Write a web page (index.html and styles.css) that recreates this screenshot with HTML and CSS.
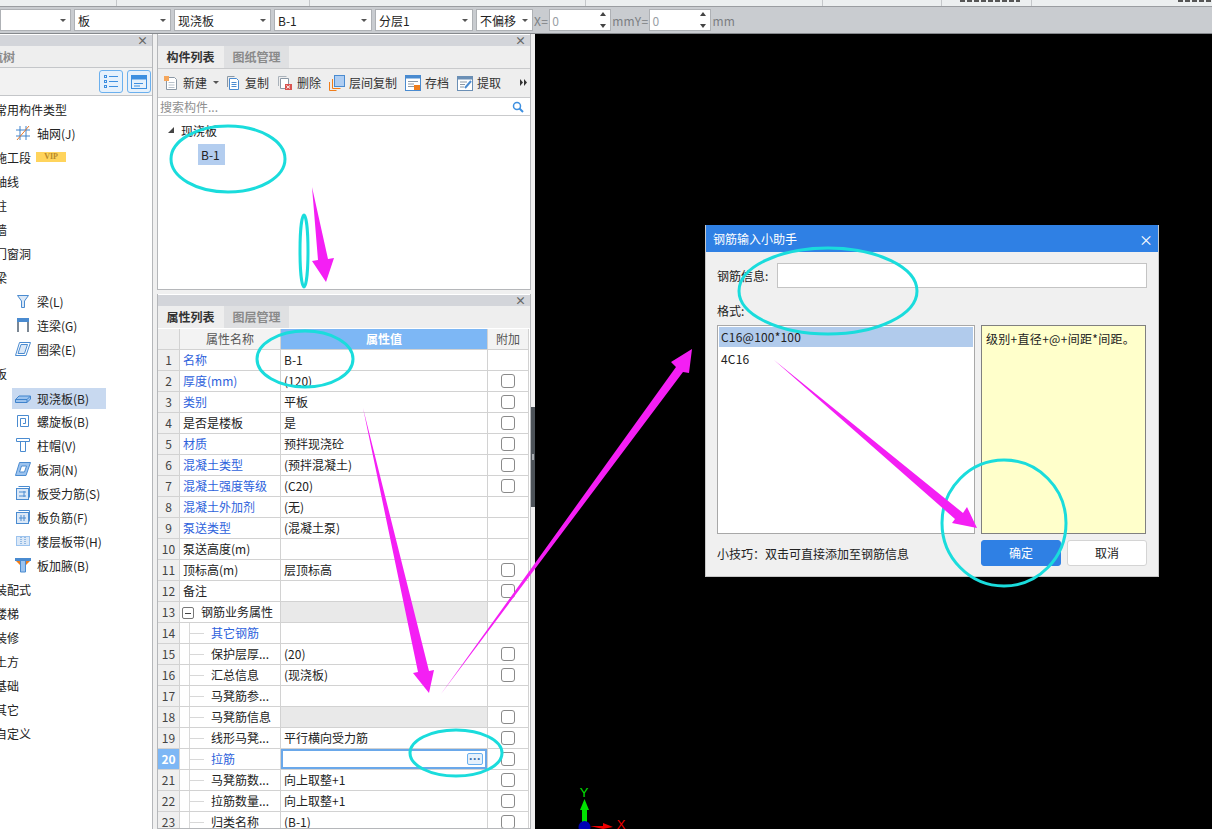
FILE: index.html
```html
<!DOCTYPE html>
<html lang="zh-CN">
<head>
    <meta charset="UTF-8">
    <title>钢筋输入小助手</title>
    <link rel="stylesheet" href="styles.css">
</head>
<body>
    <div class="menu-strip">
        <span class="strip-cell" style="width:117px"></span>
        <span class="strip-cell" style="width:193px"></span>
        <span class="strip-cell" style="width:276px"></span>
        <span class="strip-cell" style="width:237px"></span>
        <span class="strip-cell" style="width:119px"></span>
        <span class="strip-cell" style="width:90px"><i class="strip-bit bit-one"></i></span>
        <span class="strip-rest"><i class="strip-bit bit-two"></i></span>
    </div>

    <div class="option-bar">
        <div class="combo combo-first"><span></span><i class="caret"></i></div>
        <div class="combo combo-w97"><span>板</span><i class="caret"></i></div>
        <div class="combo combo-w96"><span>现浇板</span><i class="caret"></i></div>
        <div class="combo combo-w98"><span>B-1</span><i class="caret"></i></div>
        <div class="combo combo-w98"><span>分层1</span><i class="caret"></i></div>
        <div class="combo combo-w57"><span>不偏移</span><i class="caret"></i></div>
        <span class="bar-label">X=</span>
        <div class="spin"><span>0</span><b class="spin-arrows"><i class="up"></i><i class="down"></i></b></div>
        <span class="bar-label">mmY=</span>
        <div class="spin"><span>0</span><b class="spin-arrows"><i class="up"></i><i class="down"></i></b></div>
        <span class="bar-label">mm</span>
    </div>

    <div class="workspace">
        <div class="nav-panel">
            <div class="panel-head"><span class="close-x">×</span></div>
            <div class="nav-tab"><span>导航树</span></div>
            <div class="nav-tools">
                <span class="view-btn">
                    <svg width="18" height="16" viewBox="0 0 18 16"><g fill="none" stroke="#3d8fe0"><rect x="2.5" y="1.5" width="2" height="2"/><rect x="2.5" y="6.5" width="2" height="2"/><rect x="2.5" y="11.5" width="2" height="2"/><path d="M7 2.5h9M7 7.5h9M7 12.5h9"/></g></svg>
                </span>
                <span class="view-btn">
                    <svg width="18" height="16" viewBox="0 0 18 16"><rect x="1.5" y="1.5" width="15" height="13" fill="none" stroke="#3d8fe0"/><rect x="1.5" y="1.5" width="15" height="4" fill="#3d8fe0"/><path d="M4 9.5h9M4 12h6" stroke="#3d8fe0"/></svg>
                </span>
            </div>
            <div class="nav-tree">
                <div class="tree-top">常用构件类型</div>
                <div class="tree-sub">
                    <svg class="tree-icon" viewBox="0 0 16 16"><path d="M5 1v14M11 1v14M1 5h14M1 11h14" stroke="#3f83cc" fill="none"/><path d="M2 15L14 1" stroke="#e8792a" fill="none"/></svg>
                    轴网(J)
                </div>
                <div class="tree-top">施工段<span class="vip">VIP</span></div>
                <div class="tree-top">轴线</div>
                <div class="tree-top">柱</div>
                <div class="tree-top">墙</div>
                <div class="tree-top">门窗洞</div>
                <div class="tree-top">梁</div>
                <div class="tree-sub">
                    <svg class="tree-icon" viewBox="0 0 16 16"><path d="M2.500 2.500h11L9.500 8v6.500h-3V8z" fill="#dbe8f7" stroke="#4a8bd0"/></svg>
                    梁(L)
                </div>
                <div class="tree-sub">
                    <svg class="tree-icon" viewBox="0 0 16 16"><rect x="2" y="1" width="12" height="4" fill="#4a8bd0"/><path d="M3 5v10M13 5v10" stroke="#7b8794" stroke-width="2" fill="none"/></svg>
                    连梁(G)
                </div>
                <div class="tree-sub">
                    <svg class="tree-icon" viewBox="0 0 16 16"><path d="M4.500 1.500h11L11 14.500H.5z" fill="#fff" stroke="#4a8bd0"/><path d="M6 3.500h6.500L9.500 12.500H3z" fill="#dbe8f7" stroke="#4a8bd0"/></svg>
                    圈梁(E)
                </div>
                <div class="tree-top">板</div>
                <div class="tree-sub tree-selected">
                    <svg class="tree-icon" viewBox="0 0 16 16"><path d="M.5 8.500L4 5h11.500v3L12 11.500H.5z" fill="#9cc3ee" stroke="#3f83cc"/><path d="M.5 8.500H12L15.500 5M12 8.500v3" fill="none" stroke="#3f83cc"/></svg>
                    现浇板(B)
                </div>
                <div class="tree-sub">
                    <svg class="tree-icon" viewBox="0 0 16 16"><path d="M2.500 14V2.500h11v11H5.500V5.500h5v5H8" fill="none" stroke="#4a8bd0"/></svg>
                    螺旋板(B)
                </div>
                <div class="tree-sub">
                    <svg class="tree-icon" viewBox="0 0 16 16"><path d="M1.500 1.500h13v3h-13zM5.500 4.500h5v10h-5z" fill="#fff" stroke="#4a8bd0"/></svg>
                    柱帽(V)
                </div>
                <div class="tree-sub">
                    <svg class="tree-icon" viewBox="0 0 16 16"><path d="M4.500 1.500h11L11 14.500H.5z" fill="#9cc3ee" stroke="#4a8bd0"/><path d="M6.500 5h5L9.500 11h-5z" fill="#fff" stroke="#4a8bd0"/></svg>
                    板洞(N)
                </div>
                <div class="tree-sub">
                    <svg class="tree-icon" viewBox="0 0 16 16"><rect x="1.500" y="3.500" width="12" height="11" fill="#dbe8f7" stroke="#4a8bd0"/><path d="M3.500 1.500h11v11" fill="none" stroke="#4a8bd0"/><path d="M4 7h7M4 11h7M9 6v6" stroke="#4a8bd0" fill="none"/></svg>
                    板受力筋(S)
                </div>
                <div class="tree-sub">
                    <svg class="tree-icon" viewBox="0 0 16 16"><rect x="1.500" y="3.500" width="12" height="11" fill="#dbe8f7" stroke="#4a8bd0"/><path d="M3.500 1.500h11v11" fill="none" stroke="#4a8bd0"/><path d="M6 6v6M9 6v6M4 9h7" stroke="#4a8bd0" fill="none"/></svg>
                    板负筋(F)
                </div>
                <div class="tree-sub">
                    <svg class="tree-icon" viewBox="0 0 16 16"><rect x="1.500" y="3.500" width="13" height="9" fill="#dbe8f7" stroke="#9cc3ee"/><path d="M6 4v8M10 4v8" stroke="#4a8bd0" stroke-dasharray="1 1" fill="none"/></svg>
                    楼层板带(H)
                </div>
                <div class="tree-sub">
                    <svg class="tree-icon" viewBox="0 0 16 16"><path d="M0 1h16v3H0z" fill="#4a8bd0"/><path d="M5.500 4v11h5V4" fill="#9cc3ee" stroke="#4a8bd0"/><path d="M1 4h4v4zM15 4h-4v4z" fill="#f07d1a"/></svg>
                    板加腋(B)
                </div>
                <div class="tree-top">装配式</div>
                <div class="tree-top">楼梯</div>
                <div class="tree-top">装修</div>
                <div class="tree-top">土方</div>
                <div class="tree-top">基础</div>
                <div class="tree-top">其它</div>
                <div class="tree-top">自定义</div>
            </div>
        </div>

        <div class="gutter"></div>

        <div class="mid-column">
            <div class="panel list-panel">
                <div class="panel-head"><span class="close-x">×</span></div>
                <div class="tabs">
                    <span class="tab tab-on">构件列表</span>
                    <span class="tab">图纸管理</span>
                </div>
                <div class="list-tools">
                    <span class="tool tool-new">
                        <svg class="tool-icon" viewBox="0 0 16 16"><path d="M3.500 2.500h8l2 2v10h-10z" fill="#fff" stroke="#8b98a5"/><path d="M5.500 7.500h6M5.500 10h6M5.500 12.500h6" stroke="#b9c2cb"/><rect x="1" y="1" width="5" height="5" fill="#f5a65b"/></svg>
                        新建<i class="caret"></i>
                    </span>
                    <span class="tool tool-copy">
                        <svg class="tool-icon" viewBox="0 0 16 16"><path d="M4.500 3.500h7l2 2v9h-9z" fill="#fff" stroke="#4a8bd0"/><path d="M2.500 12V1.500h7" fill="none" stroke="#8b98a5"/><path d="M6.500 7.500h5M6.500 9.500h5M6.500 11.500h5" stroke="#4a8bd0"/></svg>
                        复制
                    </span>
                    <span class="tool tool-del">
                        <svg class="tool-icon" viewBox="0 0 16 16"><path d="M3.500 3.500h8v10h-8z" fill="#fff" stroke="#8b98a5"/><path d="M1.500 11V1.500h8" fill="none" stroke="#aab2ba"/><rect x="8" y="9" width="7" height="6" fill="#d9534f"/><path d="M9.500 10.500l3.500 3M13 10.500l-3.500 3" stroke="#fff"/></svg>
                        删除
                    </span>
                    <span class="tool tool-floor">
                        <svg class="tool-icon" viewBox="0 0 16 16"><rect x="5.500" y=".5" width="10" height="11" fill="#aecdf2" stroke="#4a8bd0"/><path d="M3.500 4v9.500h8M.5 7v8.500h7" fill="none" stroke="#f07d1a"/></svg>
                        层间复制
                    </span>
                    <span class="tool tool-save">
                        <svg class="tool-icon" viewBox="0 0 16 16"><rect x=".5" y=".5" width="15" height="15" fill="#fff" stroke="#4a8bd0"/><rect x=".5" y=".5" width="15" height="3" fill="#4a8bd0"/><path d="M3 6.500h10M3 9h6M3 11.500h6" stroke="#8b98a5"/><rect x="9" y="10" width="6" height="5" fill="#f07d1a"/></svg>
                        存档
                    </span>
                    <span class="tool tool-pick">
                        <svg class="tool-icon" viewBox="0 0 16 16"><rect x=".5" y="1.500" width="15" height="14" fill="#fff" stroke="#6b8fb5"/><rect x=".5" y="1.500" width="15" height="3" fill="#6b8fb5"/><path d="M3 7h7M3 9.500h5M3 12h4" stroke="#8b98a5"/><path d="M8 13l6-7" stroke="#4a8bd0" stroke-width="2"/></svg>
                        提取
                    </span>
                    <span class="more-tools">
                        <svg width="7" height="7" viewBox="0 0 7 7"><path d="M0 0l3 3.500L0 7zM4 0l3 3.500L4 7z" fill="#333"/></svg>
                    </span>
                </div>
                <div class="search-row">
                    <span>搜索构件...</span>
                    <svg width="12" height="12" viewBox="0 0 12 12"><circle cx="5" cy="5" r="3.500" fill="none" stroke="#3d8fe0" stroke-width="1.500"/><path d="M7.500 7.500L11 11" stroke="#3d8fe0" stroke-width="2"/></svg>
                </div>
                <div class="list-tree">
                    <div class="list-parent"><i class="tree-arrow"></i>现浇板</div>
                    <div class="list-child"><span>B-1</span></div>
                </div>
            </div>

            <div class="panel prop-panel">
                <div class="panel-head"><span class="close-x">×</span></div>
                <div class="tabs">
                    <span class="tab tab-on">属性列表</span>
                    <span class="tab">图层管理</span>
                </div>
                <table class="prop-table">
                    <colgroup><col class="col-idx"><col class="col-name"><col class="col-val"><col class="col-add"></colgroup>
                    <tr class="head-row"><td class="idx"></td><td class="center">属性名称</td><td class="val-head">属性值</td><td class="center">附加</td></tr>
                    <tr><td class="idx">1</td><td class="link">名称</td><td>B-1</td><td></td></tr>
                    <tr><td class="idx">2</td><td class="link">厚度(mm)</td><td>(120)</td><td class="center"><i class="check"></i></td></tr>
                    <tr><td class="idx">3</td><td class="link">类别</td><td>平板</td><td class="center"><i class="check"></i></td></tr>
                    <tr><td class="idx">4</td><td>是否是楼板</td><td>是</td><td class="center"><i class="check"></i></td></tr>
                    <tr><td class="idx">5</td><td class="link">材质</td><td>预拌现浇砼</td><td class="center"><i class="check"></i></td></tr>
                    <tr><td class="idx">6</td><td class="link">混凝土类型</td><td>(预拌混凝土)</td><td class="center"><i class="check"></i></td></tr>
                    <tr><td class="idx">7</td><td class="link">混凝土强度等级</td><td>(C20)</td><td class="center"><i class="check"></i></td></tr>
                    <tr><td class="idx">8</td><td class="link">混凝土外加剂</td><td>(无)</td><td></td></tr>
                    <tr><td class="idx">9</td><td class="link">泵送类型</td><td>(混凝土泵)</td><td></td></tr>
                    <tr><td class="idx">10</td><td>泵送高度(m)</td><td></td><td></td></tr>
                    <tr><td class="idx">11</td><td>顶标高(m)</td><td>层顶标高</td><td class="center"><i class="check"></i></td></tr>
                    <tr><td class="idx">12</td><td>备注</td><td></td><td class="center"><i class="check"></i></td></tr>
                    <tr><td class="idx">13</td><td class="group"><i class="minus"></i>钢筋业务属性</td><td class="grey"></td><td></td></tr>
                    <tr><td class="idx">14</td><td class="sub link">其它钢筋</td><td></td><td></td></tr>
                    <tr><td class="idx">15</td><td class="sub">保护层厚...</td><td>(20)</td><td class="center"><i class="check"></i></td></tr>
                    <tr><td class="idx">16</td><td class="sub">汇总信息</td><td>(现浇板)</td><td class="center"><i class="check"></i></td></tr>
                    <tr><td class="idx">17</td><td class="sub">马凳筋参...</td><td></td><td></td></tr>
                    <tr><td class="idx">18</td><td class="sub">马凳筋信息</td><td class="grey"></td><td class="center"><i class="check"></i></td></tr>
                    <tr><td class="idx">19</td><td class="sub">线形马凳...</td><td>平行横向受力筋</td><td class="center"><i class="check"></i></td></tr>
                    <tr><td class="idx idx-on">20</td><td class="sub link">拉筋</td><td class="val-on"><span class="dots">···</span></td><td class="center"><i class="check"></i></td></tr>
                    <tr><td class="idx">21</td><td class="sub">马凳筋数...</td><td>向上取整+1</td><td class="center"><i class="check"></i></td></tr>
                    <tr><td class="idx">22</td><td class="sub">拉筋数量...</td><td>向上取整+1</td><td class="center"><i class="check"></i></td></tr>
                    <tr><td class="idx">23</td><td class="sub">归类名称</td><td>(B-1)</td><td class="center"><i class="check"></i></td></tr>
                </table>
            </div>
        </div>

        <div class="gutter gutter-right"><span class="handle"></span></div>

        <div class="canvas">
            <svg class="axis" width="70" height="49" viewBox="570 780 70 49">
                <text x="584" y="797" class="axis-y">Y</text>
                <path d="M582 829V810H580L584.500 799L589 810H587V829z" fill="#00e000"/>
                <path d="M590 826H603V823L613 827L603 829z" fill="#ee0000"/>
                <circle cx="584.500" cy="827" r="6" fill="#0000b4"/>
                <text x="621" y="829" class="axis-x">X</text>
            </svg>

            <div class="dialog">
                <div class="dialog-title"><span>钢筋输入小助手</span><span class="dialog-close">×</span></div>
                <div class="dialog-body">
                    <div class="info-row">
                        <label>钢筋信息:</label>
                        <div class="info-input"></div>
                    </div>
                    <div class="format-label">格式:</div>
                    <div class="format-lists">
                        <div class="format-list">
                            <div class="format-item format-on">C16@100*100</div>
                            <div class="format-item">4C16</div>
                        </div>
                        <div class="format-note">级别+直径+@+间距*间距。</div>
                    </div>
                    <div class="dialog-foot">
                        <span class="tip">小技巧：双击可直接添加至钢筋信息</span>
                        <span class="btn btn-ok">确定</span>
                        <span class="btn">取消</span>
                    </div>
                </div>
            </div>
        </div>
    </div>

    <!-- hand drawn marks on top of the screenshot -->
    <svg class="marks" width="1212" height="829" viewBox="0 0 1212 829">
        <g fill="none" stroke="#1adcdc" stroke-width="3">
            <ellipse cx="228" cy="159" rx="57" ry="33"/>
            <ellipse cx="304" cy="251" rx="4" ry="36"/>
            <ellipse cx="305" cy="359" rx="48" ry="28"/>
            <ellipse cx="456" cy="753" rx="46" ry="23"/>
            <ellipse cx="828" cy="291" rx="89" ry="43"/>
            <ellipse cx="1004" cy="523" rx="62" ry="63"/>
        </g>
        <g fill="#f41ff4">
            <path d="M312 187L328 259L334 258L326 282L312 261L318 260z"/>
            <path d="M363 408L429 671L434 670L429 693L413 673L418 672z"/>
            <path d="M441 694L676 367L671 362L692 349L689 373L683 372z"/>
            <path d="M774 360L963 513L967 507L977 528L952 523L955 519z"/>
        </g>
    </svg>
</body>
</html>
```

FILE: styles.css
```css
* {
    box-sizing: border-box;
}
html, body {
    margin: 0;
    padding: 0;
}
body {
    position: relative;
    width: 1212px;
    height: 829px;
    overflow: hidden;
    background: #f0f0f0;
    font-family: "Noto Sans CJK SC", "Noto Sans", sans-serif;
    font-size: 12px;
    color: #222;
}

/* top strip and option bar */
.menu-strip {
    display: flex;
    height: 7px;
    background: #eceff0;
    border-bottom: 1px solid #9a9da1;
}
.strip-cell {
    border-right: 1px solid #c4c7ca;
}
.strip-bit {
    display: block;
    height: 2px;
    background: repeating-linear-gradient(90deg, #555 0 5px, transparent 5px 7px);
}
.bit-one {
    width: 60px;
    margin-left: 18px;
}
.bit-two {
    width: 34px;
    margin-left: 146px;
}
.option-bar {
    display: flex;
    align-items: center;
    height: 27px;
    background: #c9ccd0;
    border-bottom: 1px solid #85888c;
}
.combo {
    display: flex;
    align-items: center;
    justify-content: space-between;
    height: 22px;
    margin-right: 3px;
    padding: 0 4px 0 3px;
    background: #fff;
    border: 1px solid #aeb1b5;
}
.combo-first { width: 71px; }
.combo-w97 { width: 97px; }
.combo-w96 { width: 97px; }
.combo-w98 { width: 98px; }
.combo-w57 { width: 57px; margin-right: 0; }
.caret {
    display: inline-block;
    width: 0;
    height: 0;
    border-left: 3px solid transparent;
    border-right: 3px solid transparent;
    border-top: 3px solid #555;
}
.bar-label {
    padding: 0 1px;
    color: #7b7e82;
    letter-spacing: .3px;
}
.spin {
    display: flex;
    align-items: center;
    justify-content: space-between;
    width: 62px;
    height: 22px;
    padding: 0 4px 0 2px;
    background: #fff;
    border: 1px solid #aeb1b5;
    color: #9aa0a6;
}
.spin-arrows {
    display: flex;
    flex-direction: column;
    gap: 8px;
}
.spin-arrows i {
    width: 0;
    height: 0;
    border-left: 3px solid transparent;
    border-right: 3px solid transparent;
}
.spin-arrows .up { border-bottom: 4px solid #444; }
.spin-arrows .down { border-top: 4px solid #444; }

/* main columns */
.workspace {
    display: flex;
    height: 795px;
}
.nav-panel {
    width: 153px;
    overflow: hidden;
    background: #fff;
    border-right: 1px solid #b5b7ba;
}
.gutter {
    width: 4px;
    background: #f0f0f0;
}
.gutter-right {
    padding-top: 373px;
}
.handle {
    display: block;
    width: 4px;
    height: 100px;
    background: #4d5359 linear-gradient(#a8acb0, #a8acb0) center / 2px 6px no-repeat;
}
.mid-column {
    display: flex;
    flex-direction: column;
    width: 374px;
}
.panel {
    display: flex;
    flex-direction: column;
    background: #fff;
    border: 1px solid #b5b7ba;
    border-top: 0;
    overflow: hidden;
}
.list-panel {
    height: 256px;
    margin-bottom: 4px;
}
.prop-panel {
    flex: 1;
}
.panel-head {
    display: flex;
    justify-content: flex-end;
    align-items: center;
    flex: none;
    height: 11px;
    margin-top: 1px;
    padding-right: 4px;
    background: #d3d5da;
}
.close-x {
    color: #666;
    font-size: 11px;
    line-height: 11px;
    font-weight: bold;
}

/* navigation tree */
.nav-tab {
    height: 22px;
    background: #eeeeee;
    border-bottom: 1px solid #c4c6c9;
    color: #8a8a8a;
    font-weight: bold;
    line-height: 21px;
    white-space: nowrap;
}
.nav-tab span {
    margin-left: -21px;
}
.nav-tools {
    display: flex;
    justify-content: flex-end;
    align-items: center;
    gap: 4px;
    height: 28px;
    padding-right: 1px;
    background: #f2f2f2;
    border-bottom: 1px solid #c4c6c9;
}
.view-btn {
    display: flex;
    align-items: center;
    justify-content: center;
    width: 24px;
    height: 23px;
    background: #e6f1fc;
    border: 1px solid #6bb0ee;
    border-radius: 3px;
}
.nav-tree {
    padding-top: 2px;
}
.tree-top, .tree-sub {
    display: flex;
    align-items: center;
    height: 24px;
    padding-bottom: 2px;
    white-space: nowrap;
}
.tree-top {
    margin-left: -5px;
}
.tree-sub {
    width: 94px;
    margin-left: 12px;
    padding-left: 3px;
    gap: 6px;
}
.tree-selected {
    height: 21px;
    margin-top: 2px;
    margin-bottom: 1px;
    padding-bottom: 0;
    background: #c8d9f0;
}
.tree-icon {
    width: 16px;
    height: 16px;
    flex: none;
}
.vip {
    width: 30px;
    height: 10px;
    margin-left: 5px;
    background: #ffd45c;
    color: #b8892a;
    font-family: "Liberation Serif", serif;
    font-size: 8px;
    font-weight: bold;
    line-height: 10px;
    text-align: center;
}

/* tabs, shared by both mid panels */
.tabs {
    display: flex;
    flex: none;
    height: 22px;
    background: #eeeeee;
}
.tab {
    width: 65px;
    margin-right: 1px;
    background: #dfe0e2;
    color: #8a8a8a;
    font-weight: bold;
    line-height: 22px;
    text-align: center;
}
.tab-on {
    background: #eeeeee;
    color: #333;
}

/* component list */
.list-tools {
    display: flex;
    align-items: center;
    flex: none;
    height: 29px;
    padding-bottom: 1px;
    background: #eeeeee;
    border-top: 1px solid #c9cacc;
    color: #333;
}
.tool {
    display: flex;
    align-items: center;
    white-space: nowrap;
}
.tool-icon {
    width: 16px;
    height: 16px;
    flex: none;
    margin-right: 4px;
}
.tool-new { margin-left: 5px; }
.tool-new .caret { margin-left: 6px; }
.tool-copy { margin-left: 6px; }
.tool-del { margin-left: 8px; }
.tool-floor { margin-left: 8px; }
.tool-save { margin-left: 8px; }
.tool-pick { margin-left: 8px; }
.more-tools {
    display: flex;
    margin-left: 19px;
}
.search-row {
    display: flex;
    align-items: center;
    justify-content: space-between;
    flex: none;
    height: 19px;
    padding: 0 6px 0 2px;
    background: #fff;
    border-top: 1px solid #c9cacc;
    border-bottom: 1px solid #c9cacc;
    color: #8f8f8f;
}
.list-tree {
    flex: 1;
    padding-top: 3px;
}
.list-parent {
    display: flex;
    align-items: center;
    height: 22px;
    padding-left: 10px;
}
.tree-arrow {
    width: 0;
    height: 0;
    margin-right: 7px;
    border-left: 6px solid transparent;
    border-bottom: 6px solid #444;
}
.list-child {
    padding-left: 40px;
    margin-top: 3px;
}
.list-child span {
    display: inline-block;
    height: 21px;
    width: 27px;
    padding-left: 3px;
    background: #b3cdef;
    line-height: 21px;
}

/* property table */
.prop-table {
    width: 371px;
    margin-top: 1px;
    border-collapse: separate;
    border-spacing: 0;
    table-layout: fixed;
}
.col-idx { width: 22px; }
.col-name { width: 101px; }
.col-val { width: 207px; }
.col-add { width: 41px; }
.prop-table td {
    height: 21px;
    padding: 0 3px;
    border-right: 1px solid #d2d2d2;
    border-bottom: 1px solid #d2d2d2;
    line-height: 20px;
    white-space: nowrap;
    overflow: hidden;
}
.head-row td {
    color: #555;
    background: #f3f3f3;
}
.prop-table .idx {
    padding: 0;
    background: #efefef;
    color: #444;
    text-align: center;
}
.prop-table .idx-on {
    background: #7db7f5;
    color: #fff;
    font-weight: bold;
}
.prop-table .val-head {
    background: #7db7f5;
    color: #fff;
    font-weight: bold;
    text-align: center;
}
.center {
    text-align: center;
}
.link {
    color: #2e62dc;
}
.prop-table .grey {
    background: #e9e9e9;
}
.prop-table .group {
    padding-left: 2px;
}
.minus {
    display: inline-block;
    width: 12px;
    height: 12px;
    margin-right: 7px;
    vertical-align: -2px;
    border: 1px solid #777;
    border-radius: 2px;
    background: linear-gradient(#444, #444) center / 6px 1px no-repeat;
}
.prop-table .sub {
    padding-left: 31px;
    background:
        linear-gradient(#d8d8d8, #d8d8d8) 9px 0 / 1px 100% no-repeat,
        linear-gradient(#d8d8d8, #d8d8d8) 9px 50% / 15px 1px no-repeat;
}
.check {
    display: block;
    width: 14px;
    height: 14px;
    margin: 0 auto;
    background: #fff;
    border: 1px solid #8a8a8a;
    border-radius: 3px;
}
.prop-table .val-on {
    padding: 0 4px 0 0;
    box-shadow: inset 0 0 0 2px #6aa8ea;
    text-align: right;
}
.dots {
    display: inline-block;
    width: 16px;
    height: 12px;
    background: #e6f1fc;
    border: 1px solid #6bb0ee;
    border-radius: 2px;
    color: #3d6fa8;
    font-family: "Liberation Sans", sans-serif;
    font-size: 12px;
    font-weight: bold;
    line-height: 10px;
    text-align: center;
    vertical-align: 1px;
}

/* drawing area */
.canvas {
    position: relative;
    flex: 1;
    background: #000;
    overflow: hidden;
}
.axis {
    position: absolute;
    left: 35px;
    bottom: 0;
}
.axis-y, .axis-x {
    font-family: "Liberation Sans", sans-serif;
    font-size: 13px;
    text-anchor: middle;
}
.axis-y { fill: #00e000; }
.axis-x { fill: #ee0000; }

/* rebar dialog */
.dialog {
    position: absolute;
    left: 170px;
    top: 191px;
    width: 454px;
    height: 352px;
    background: #f0f0f0;
    border: 1px solid #c8c8c8;
    border-top: 0;
}
.dialog-title {
    display: flex;
    justify-content: space-between;
    align-items: center;
    height: 27px;
    padding: 0 5px 0 7px;
    background: #2f80e4;
    color: #fff;
}
.dialog-close {
    font-size: 14px;
    line-height: 14px;
}
.dialog-body {
    padding: 11px 11px 0;
}
.info-row {
    display: flex;
    align-items: center;
    height: 25px;
}
.info-row label {
    width: 60px;
}
.info-input {
    width: 370px;
    height: 25px;
    background: #fff;
    border: 1px solid #c4c4c4;
}
.format-label {
    height: 37px;
    padding-top: 14px;
    line-height: 18px;
}
.format-lists {
    display: flex;
    justify-content: space-between;
    height: 209px;
    width: 429px;
}
.format-list {
    width: 258px;
    padding: 1px;
    background: #fff;
    border: 1px solid #a8a8a8;
}
.format-item {
    height: 20px;
    margin-bottom: 2px;
    padding-left: 2px;
    letter-spacing: .2px;
    line-height: 20px;
}
.format-on {
    background: #b1cbec;
}
.format-note {
    width: 165px;
    padding: 4px;
    background: #ffffcb;
    border: 1px solid #808080;
    letter-spacing: .3px;
    line-height: 18px;
}
.dialog-foot {
    display: flex;
    align-items: center;
    height: 26px;
    margin-top: 6px;
}
.tip {
    width: 264px;
}
.btn {
    width: 80px;
    height: 26px;
    margin-left: 6px;
    background: #fff;
    border: 1px solid #d4d4d4;
    border-radius: 3px;
    line-height: 24px;
    text-align: center;
}
.btn-ok {
    margin-left: 0;
    background: #2f80e4;
    border-color: #2f80e4;
    color: #fff;
}

/* annotations */
.marks {
    position: absolute;
    left: 0;
    top: 0;
    pointer-events: none;
}
```
